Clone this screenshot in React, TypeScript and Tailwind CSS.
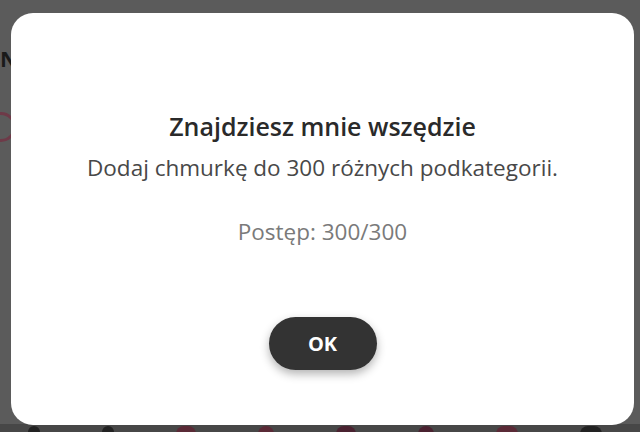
import React from "react";

function Backdrop() {
  return (
    <div className="absolute inset-0 overflow-hidden bg-[#5b5b5b]">
      <span className="absolute left-[0px] top-[42px] text-[22px] font-bold text-[#1a1a1a]">
        N
      </span>
      <div className="absolute left-[-14px] top-[112px] h-[30px] w-[30px] rounded-full border-[3px] border-[#6e3a48]" />
      <div className="absolute bottom-0 left-0 right-0 h-[8px] bg-[#474747]">
        <div className="flex gap-[62px] pl-[28px] pt-[2px]">
          <span className="block h-[8px] w-[12px] rounded-t-full bg-[#222]" />
          <span className="block h-[8px] w-[12px] rounded-t-full bg-[#222]" />
          <span className="block h-[8px] w-[20px] rounded-t-full bg-[#5a2a36]" />
          <span className="block h-[8px] w-[16px] rounded-t-full bg-[#5a2a36]" />
          <span className="block h-[8px] w-[20px] rounded-t-full bg-[#4a2230]" />
          <span className="block h-[8px] w-[16px] rounded-t-full bg-[#4a2230]" />
          <span className="block h-[8px] w-[22px] rounded-t-full bg-[#5a2a36]" />
          <span className="block h-[8px] w-[22px] rounded-t-full bg-[#222]" />
        </div>
      </div>
    </div>
  );
}

export default function App() {
  return (
    <div className="relative h-[432px] w-[640px] overflow-hidden [font-family:'Open_Sans',sans-serif]">
      <Backdrop />
      <div className="absolute left-[11px] top-[13px] flex h-[412px] w-[623px] flex-col items-center rounded-[22px] bg-white pt-[97px]">
        <h2 className="mb-[11px] text-[25px] font-semibold leading-[32px] text-[#2a2a2a]">
          Znajdziesz mnie wszędzie
        </h2>
        <p className="text-[22.5px] leading-[30px] text-[#484848]">
          Dodaj chmurkę do 300 różnych podkategorii.
        </p>
        <p className="mt-[34px] text-[22.5px] leading-[30px] text-[#7a7a7a]">
          Postęp: 300/300
        </p>
        <button className="mt-[70px] h-[53px] w-[108px] rounded-full bg-[#333333] text-[20px] font-bold text-white shadow-[0_4px_10px_rgba(0,0,0,0.3)]">
          OK
        </button>
      </div>
    </div>
  );
}
